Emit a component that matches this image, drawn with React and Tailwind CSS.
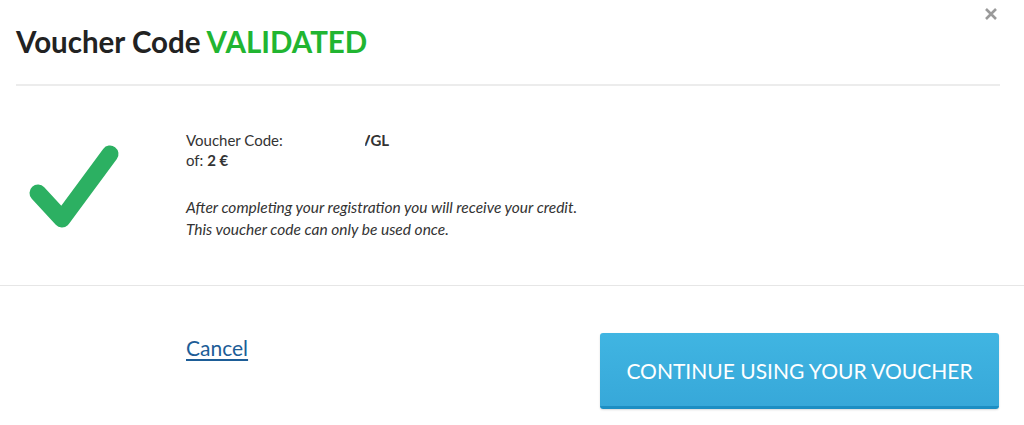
import React from "react";

export default function App() {
  return (
    <div className="w-[1024px] h-[425px] bg-white relative overflow-hidden" style={{ fontFamily: "Lato, 'Open Sans', sans-serif" }}>
      <button className="absolute left-[984px] top-[7px] w-[14px] h-[14px]" aria-label="Close">
        <svg width="14" height="14" viewBox="0 0 14 14">
          <path d="M2 2 L12 12 M12 2 L2 12" stroke="#9a9a9a" strokeWidth="2.6" strokeLinecap="butt" />
        </svg>
      </button>
      <div className="px-4">
        <div className="pt-[25px] pb-[25px]">
          <h1 className="text-[29.5px] leading-[34px] font-bold text-[#222]">
            Voucher Code <span className="text-[#21b531]">VALIDATED</span>
          </h1>
        </div>
        <div className="mr-[8px] h-[2px] bg-[#ececec]" />
      </div>
      <div className="flex h-[199px]">
        <div className="w-[186px] pl-[24px] pt-[49px]">
          <svg width="104" height="100" viewBox="0 0 104 100">
            <polyline points="14,58 38,84 86,19" fill="none" stroke="#2cb062" strokeWidth="17" strokeLinecap="round" strokeLinejoin="round" />
          </svg>
        </div>
        <div className="pt-[44px] text-[15px] text-[#333] leading-[20px]">
          <div className="flex">
            <span className="w-[172px]">Voucher Code:</span>
            <span className="font-bold ml-[2px]">
              <span className="inline-block [clip-path:inset(0_0_0_50%)]">V</span>GL
            </span>
          </div>
          <div>
            of: <span className="font-bold">2 €</span>
          </div>
          <div className="mt-[26px] italic text-[15.5px] leading-[22px]">
            <div>After completing your registration you will receive your credit.</div>
            <div>This voucher code can only be used once.</div>
          </div>
        </div>
      </div>
      <div className="h-px bg-[#e6e6e6]" />
      <div className="flex items-start pl-[186px] pr-[25px] pt-[47px]">
        <a href="#" className="text-[21px] text-[#1d5d97] underline underline-offset-[3px] decoration-[1.5px] leading-[30px]">
          Cancel
        </a>
        <div className="flex-1" />
        <button className="w-[399px] h-[76px] rounded-[3px] bg-gradient-to-b from-[#40b5e2] to-[#37a8d9] border-b-[3px] border-[#1c8ec3] text-white text-[21px] pt-[3px] shadow-[0_1px_2px_rgba(0,0,0,0.15)]">
          CONTINUE USING YOUR VOUCHER
        </button>
      </div>
    </div>
  );
}
